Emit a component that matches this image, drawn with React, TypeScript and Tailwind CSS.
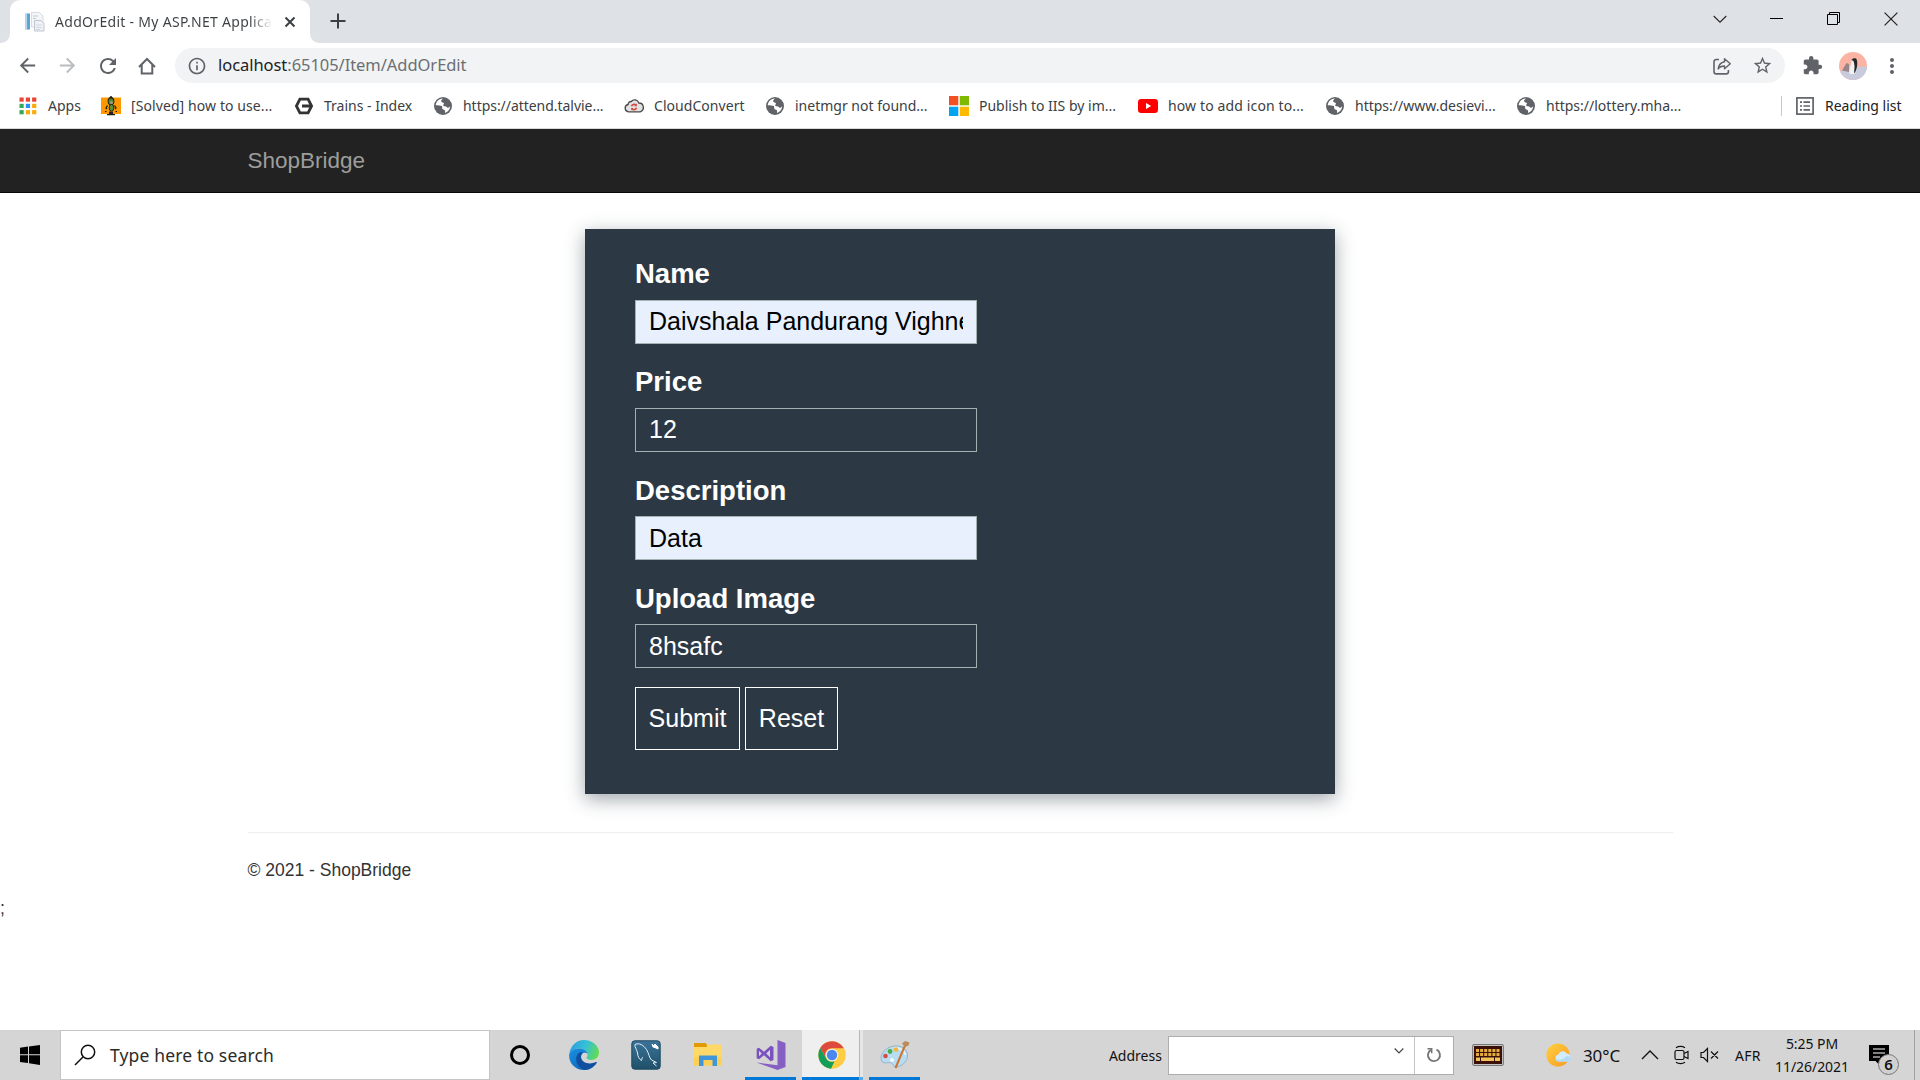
import type { ReactNode } from 'react';
import {
  MdArrowBack,
  MdArrowForward,
  MdRefresh,
  MdInfoOutline,
  MdStarBorder,
  MdExtension,
  MdMoreVert,
} from 'react-icons/md';

/* ---------- Browser icons ---------- */

function PageIcon() {
  return (
    <svg width="20" height="20" viewBox="0 0 20 20">
      <rect x="0.5" y="1.5" width="4.500" height="16" fill="#5aa5d6" />
      <rect x="0.5" y="1.5" width="1.5" height="16" fill="#b9d9ee" />
      <path d="M6.5 .5h8l3.500 3.500v11H6.500z" fill="#f3f5f8" stroke="#cfd3db" strokeWidth=".8" />
      <path d="M8 4h5M8 6.500h3" stroke="#c2c8d4" />
      <path d="M9.500 8.500h6.500l3 3v7.500H9.500z" fill="#eef1f6" stroke="#b4bac7" strokeWidth=".8" />
      <path d="M11 13h6M11 15.500h6M11 17.500h4" stroke="#d3d8e2" />
    </svg>
  );
}

function HomeIcon() {
  return (
    <svg width="20" height="20" viewBox="0 0 20 20" fill="none" stroke="#5f6368" strokeWidth="2">
      <path d="M2 11 10 3l8 8" />
      <path d="M4.700 9v8.500h10.600V9" />
    </svg>
  );
}

function ShareIcon() {
  return (
    <svg width="20" height="20" viewBox="0 0 20 20" fill="none" stroke="#5f6368" strokeWidth="1.600">
      <path d="M7 3.500H4.200A2.200 2.200 0 0 0 2 5.700v10a2.200 2.200 0 0 0 2.200 2.200h10a2.200 2.200 0 0 0 2.200-2.200V14" />
      <path d="M12.500 2.800 18.300 7.800l-5.800 5V10c-3 0-5 .8-6.300 3 .4-3.800 2.600-6.500 6.300-7.200z" strokeLinejoin="round" strokeWidth="1.400" />
    </svg>
  );
}

function AppsIcon() {
  const colors = ['#ea4335', '#ea4335', '#ea4335', '#34a853', '#2492ff', '#fbaa0b', '#34a853', '#fbaa0b', '#fbaa0b'];
  return (
    <svg width="20" height="20" viewBox="0 0 20 20">
      {colors.map((c, i) => (
        <rect key={i} x={1.500 + (i % 3) * 6.300} y={1.500 + Math.floor(i / 3) * 6.300} width="4.200" height="4.200" fill={c} />
      ))}
    </svg>
  );
}

function BeetleIcon() {
  return (
    <svg width="20" height="20" viewBox="0 0 20 20">
      <rect y="1.500" width="20" height="16.500" fill="#ff9800" />
      <path d="M7 4 10 .5 13 4M6.500 9.500 5 12l1 1M13.500 9.500 15 12l-1 1M4 15.500h1.500M14.500 15.500H16M6 18.700h8" fill="none" stroke="#1d1d10" strokeWidth="1.200" />
      <ellipse cx="10" cy="5.500" rx="3" ry="3.500" fill="#56803b" stroke="#1c2913" />
      <ellipse cx="10.500" cy="11.800" rx="2.300" ry="3.300" fill="#5a9434" stroke="#1c2913" />
      <circle cx="10.500" cy="6.500" r="1.500" fill="#9a9a8e" />
      <path d="M8 15.500h4v2.500H8z" fill="#222" />
    </svg>
  );
}

function HexIcon() {
  return (
    <svg width="20" height="20" viewBox="0 0 20 20" fill="none" stroke="#333" strokeWidth="2.800">
      <path d="M5.900 3.100h8.200L17.600 10l-3.500 6.900H5.900L2.400 10z" />
      <path d="M8 10h9" strokeWidth="3" />
    </svg>
  );
}

function GlobeIcon() {
  return (
    <svg width="20" height="20" viewBox="0 0 20 20">
      <circle cx="10" cy="10" r="9" fill="#5f6368" />
      <path d="M10.500 2.600c-1.500.6-2.600 1.500-2.300 2.800.4 1.200 2.300.6 2.700 1.800.3 1-1 1.300-.7 2.300.3.900 1.600.6 2.600.9 1.300.4 1.300 1.500 2.400 1.300.8-.2 1.300-.7 2-1.700-.1 3.200-2.400 6.200-5.300 7 .2-1.200.5-2-.3-2.900-.7-.8-1.900-.4-2.300-1.400-.4-1.100.3-1.900-.5-2.600C7.700 9.200 5 9.600 2.700 9.200 3 5.800 6 2.400 10.500 2.600z" fill="#fff" />
    </svg>
  );
}

function CloudIcon() {
  return (
    <svg width="20" height="20" viewBox="0 0 20 20">
      <path d="M4.500 15.800a3.700 3.700 0 0 1-.4-7.300 3 3 0 0 1 3.200-3 4.300 4.300 0 0 1 7.500 1.500 4.500 4.500 0 0 1 1.400 8.800z" fill="#e2e2e2" stroke="#484848" strokeWidth="1.300" />
      <path d="M7.500 10.300a2.600 2.600 0 0 1 4.500-1M12.500 11.800a2.600 2.600 0 0 1-4.500 1" fill="none" stroke="#d8453a" strokeWidth="1.600" />
      <path d="M12.800 7.600v2.600h-2.500zM7.200 14.500v-2.600h2.500z" fill="#d8453a" />
    </svg>
  );
}

function MicrosoftIcon() {
  return (
    <svg width="20" height="20" viewBox="0 0 20 20">
      <path d="M0 0h9.300v9.300H0z" fill="#f25022" />
      <path d="M10.700 0H20v9.300h-9.300z" fill="#7fba00" />
      <path d="M0 10.700h9.300V20H0z" fill="#00a4ef" />
      <path d="M10.700 10.700H20V20h-9.300z" fill="#ffb900" />
    </svg>
  );
}

function YouTubeIcon() {
  return (
    <svg width="20" height="20" viewBox="0 0 20 20">
      <rect y="3" width="20" height="14" rx="3.200" fill="#f00" />
      <path d="M8 7v6l5.200-3z" fill="#fff" />
    </svg>
  );
}

function ReadingListIcon() {
  return (
    <svg width="20" height="20" viewBox="0 0 20 20" fill="none" stroke="#5f6368" strokeWidth="1.700">
      <rect x="1.900" y="1.900" width="16.200" height="16.200" />
      <path d="M5 6.200h2M8.500 6.200h6.500M5 10h2M8.500 10h6.500M5 13.800h2M8.500 13.800h6.500" />
    </svg>
  );
}

function Avatar() {
  return (
    <svg width="28" height="28" viewBox="0 0 28 28">
      <defs>
        <clipPath id="avatar">
          <circle cx="14" cy="14" r="14" />
        </clipPath>
      </defs>
      <g clipPath="url(#avatar)">
        <path d="M0 0h28v28H0z" fill="#fbb4a4" />
        <path d="M0 19c6-2 10 0 14-2s9-3 14-2v13H0z" fill="#c7cbdb" />
        <path d="M3 18.500 7.500 11l2.500 1v8z" fill="#9a858a" />
        <path d="M12.500 9c1.200-2.600 3.500-3.200 5-1.500 1.400 3.500.5 11-1.800 14.500h-5c-1.500-3.500 1.500-8 1.800-13z" fill="#f1f1f1" />
        <path d="M12.500 8c1-2 4.700-2.500 5.300-.2 1.200 4.500 0 10.500-2.500 13.700-.5-3 .5-5 .2-7.500-.2-2-.5-3.500-1-5z" fill="#26262a" />
      </g>
    </svg>
  );
}

/* ---------- Browser chrome ---------- */

function TabStrip() {
  return (
    <div className="flex h-[43px] bg-[#dee1e6]">
      <div className="h-full w-[10px] bg-white">
        <div className="h-full rounded-br-[9px] bg-[#dee1e6]" />
      </div>
      <div className="flex w-[300px] items-center rounded-t-[10px] bg-white pl-[15px]">
        <PageIcon />
        <div className="ml-[10px] w-[217px] overflow-hidden whitespace-nowrap bg-linear-to-r from-[#3c4043] from-90% to-transparent bg-clip-text text-[14px] tracking-[0.3px] text-transparent">
          AddOrEdit - My ASP.NET Application
        </div>
        <svg className="ml-[12px]" width="12" height="12" viewBox="0 0 12 12" stroke="#3c4043" strokeWidth="2">
          <path d="m1.500 1.500 9 9m0-9-9 9" />
        </svg>
      </div>
      <div className="h-full w-[10px] bg-white">
        <div className="h-full rounded-bl-[9px] bg-[#dee1e6]" />
      </div>
      <svg className="ml-[10px] mt-[13px]" width="16" height="16" viewBox="0 0 16 16" stroke="#3c4043" strokeWidth="2">
        <path d="M8 .5v15M.5 8h15" />
      </svg>
      <div className="ml-auto flex h-[37px] items-center text-black">
        <svg className="mr-[43px]" width="14" height="14" viewBox="0 0 14 14" fill="none" stroke="#222" strokeWidth="1.100">
          <path d="m.7 4 6.300 6.200L13.300 4" />
        </svg>
        <svg className="mr-[44px]" width="13" height="13" viewBox="0 0 13 13" stroke="currentColor">
          <path d="M0 6.500h13" />
        </svg>
        <svg className="mr-[44px]" width="13" height="13" viewBox="0 0 13 13" fill="none" stroke="currentColor">
          <path d="M.5 2.500h10v10H.5zM2.500 2.500v-2h10v10h-2" />
        </svg>
        <svg className="mr-[22px]" width="14" height="14" viewBox="0 0 14 14" stroke="#222" strokeWidth="1.200">
          <path d="m.6.6 12.800 12.800m0-12.800L.6 13.400" />
        </svg>
      </div>
    </div>
  );
}

function Toolbar() {
  return (
    <div className="flex h-[45px] items-center bg-white pl-[16px] text-[#5f6368]">
      <MdArrowBack size={23} />
      <MdArrowForward className="ml-[17px] text-[#babcbe]" size={23} />
      <MdRefresh className="ml-[17px]" size={24} />
      <div className="ml-[17px]">
        <HomeIcon />
      </div>
      <div className="ml-[18px] flex h-[35px] w-[1610px] items-center rounded-full bg-[#f1f3f4] pl-3 pr-3">
        <MdInfoOutline size={20} />
        <div className="ml-[11px] text-[16.5px] tracking-[-0.05px] text-[#6b6f73]">
          <span className="text-[#202124]">localhost</span>:65105/Item/AddOrEdit
        </div>
        <div className="ml-auto flex items-center gap-5">
          <ShareIcon />
          <MdStarBorder size={21} />
        </div>
      </div>
      <MdExtension className="ml-[17px]" size={21} />
      <div className="ml-[16px]">
        <Avatar />
      </div>
      <MdMoreVert className="ml-[13px]" size={24} />
    </div>
  );
}

function Bookmark({ icon, label, className }: { icon: ReactNode; label: string; className: string }) {
  return (
    <div className={`flex shrink-0 items-center gap-[10px] whitespace-nowrap ${className}`}>
      {icon}
      <span>{label}</span>
    </div>
  );
}

function BookmarksBar() {
  return (
    <div className="flex h-[41px] items-center border-b border-[#d6d8db] bg-white pb-[5px] pl-[18px] text-[14px] text-[#3c4043]">
      <Bookmark className="w-[83px]" icon={<AppsIcon />} label="Apps" />
      <Bookmark className="w-[193px] tracking-[0.09px]" icon={<BeetleIcon />} label="[Solved] how to use..." />
      <Bookmark className="w-[139px]" icon={<HexIcon />} label="Trains - Index" />
      <Bookmark className="w-[191px] tracking-[-0.04px]" icon={<GlobeIcon />} label="https://attend.talvie..." />
      <Bookmark className="w-[141px] tracking-[0.05px]" icon={<CloudIcon />} label="CloudConvert" />
      <Bookmark className="w-[184px]" icon={<GlobeIcon />} label="inetmgr not found..." />
      <Bookmark className="w-[189px]" icon={<MicrosoftIcon />} label="Publish to IIS by im..." />
      <Bookmark className="w-[187px] tracking-[0.13px]" icon={<YouTubeIcon />} label="how to add icon to..." />
      <Bookmark className="w-[191px]" icon={<GlobeIcon />} label="https://www.desievi..." />
      <Bookmark className="w-[265px]" icon={<GlobeIcon />} label="https://lottery.mha..." />
      <div className="mr-[13px] h-5 w-px bg-[#c6c9cd]" />
      <Bookmark className="text-[#202124]" icon={<ReadingListIcon />} label="Reading list" />
    </div>
  );
}

/* ---------- Page ---------- */

type FieldProps = { label: string; value: string; autofilled?: boolean; raised?: boolean };

function Field({ label, value, autofilled = false, raised = false }: FieldProps) {
  return (
    <div className="mb-[18px] h-[90px]">
      <div className={`h-[46px] text-[27.5px] font-bold leading-[38px] text-white ${raised ? 'pt-[1px]' : 'pt-[2px]'}`}>
        {label}
      </div>
      <div
        className={`h-11 w-[342px] border border-[#a2b3af] px-[13px] text-[25px] ${
          raised ? 'leading-[40px]' : 'leading-[42px]'
        } ${autofilled ? 'bg-[#e8f0fe] text-black' : 'text-white'}`}
      >
        <div className="overflow-hidden whitespace-nowrap">{value}</div>
      </div>
    </div>
  );
}

function Page() {
  return (
    <div className="h-[901px] bg-white font-['Liberation_Sans',sans-serif]">
      <div className="h-16 border-b border-[#080808] bg-[#222] pl-[247.5px] text-[22.5px] leading-[63px] text-[#9d9d9d]">
        ShopBridge
      </div>
      <div className="mx-auto mt-9 h-[565px] w-[750px] bg-[#2c3944] pl-[50px] pt-[25px] shadow-[0_5px_18px_rgba(45,60,70,0.46)]">
        <Field label="Name" value="Daivshala Pandurang Vighnesh" autofilled raised />
        <Field label="Price" value="12" raised />
        <Field label="Description" value="Data" autofilled />
        <Field label="Upload Image" value="8hsafc" />
        <div className="mt-[19px] flex gap-[5px] text-[25px] leading-none text-white">
          <button className="h-[63px] w-[105px] border border-white">Submit</button>
          <button className="h-[63px] w-[93px] border border-white">Reset</button>
        </div>
      </div>
      <div className="mx-[247.5px] mt-[38px] border-t border-[#eee] pt-[25px] text-[17.5px] leading-[25px] text-[#333]">
        © 2021 - ShopBridge
      </div>
      <div className="mt-[13px] text-[17.5px] leading-[25px] text-[#333]">;</div>
    </div>
  );
}

/* ---------- Taskbar icons ---------- */

function EdgeIcon() {
  return (
    <svg width="30" height="30" viewBox="0 0 30 30">
      <defs>
        <linearGradient id="edgeTop" x1="0" y1=".3" x2="1" y2=".6">
          <stop offset="0" stopColor="#2a9fe0" />
          <stop offset=".5" stopColor="#35c1d8" />
          <stop offset="1" stopColor="#62dc4f" />
        </linearGradient>
        <linearGradient id="edgeLeft" x1="0" y1="0" x2=".6" y2="1">
          <stop offset="0" stopColor="#1b8fe0" />
          <stop offset="1" stopColor="#0f6cc0" />
        </linearGradient>
      </defs>
      <path d="M.3 14C1.200 6 7.500 0 15 0c8.500 0 15 6 15 12.500 0 4.500-3.500 7.500-7.500 7.500-3.300 0-5-1.200-5-2.200 0-.7 1.100-1.300 1.100-3.300C18.600 11 15 8.500 10 8.500 6 8.500 2 10.500.3 14z" fill="url(#edgeTop)" />
      <path d="M.2 14.500C1.500 10.500 5.500 8.500 10 8.500c5 0 8.500 2.500 8.600 5.500-2-2.300-6.600-1.500-6.600 3 0 7 6 12 12 10-2.500 2-5.500 3-9 3C6 30-.5 23 .2 14.500z" fill="url(#edgeLeft)" />
      <path d="M10.500 12.500C7 15 6 20 9 25c1.500 2.500 3.700 4.300 6.500 5 5-.2 9.500-2.500 12.300-7.200.3-.7-.2-1.100-.8-.8-6.500 3-14.500 1-15-5 0-2 .8-3.600 2-4.500-1-.5-2.500-.5-3.500 0z" fill="#0f4f9e" />
    </svg>
  );
}

function MySqlIcon() {
  return (
    <svg width="30" height="30" viewBox="0 0 30 30">
      <defs>
        <linearGradient id="sql" x1="0" y1="0" x2="0" y2="1">
          <stop offset="0" stopColor="#3a739a" />
          <stop offset="1" stopColor="#1f5068" />
        </linearGradient>
      </defs>
      <rect x=".8" y=".8" width="28.400" height="28.400" rx="3" fill="url(#sql)" stroke="#1e4a62" />
      <path d="M4 4.500C8 2.500 12.500 5 15.500 9.500c2.500 4 2.500 8 5 10.500l5 2.500-3.500.5 3.500 3M4 4.500C3.500 7.500 6 9.500 6.500 13c.5 4 1.500 6 4 7.500.500-2 .5-3 1.500-3.500" fill="none" stroke="#e5eff5" strokeWidth="1" />
      <path d="m21 4 2 2 1-2 3 3v2l-2-1-3-1z" fill="#fff" stroke="#fff" />
    </svg>
  );
}

function FolderIcon() {
  return (
    <svg width="28" height="24" viewBox="0 0 28 24">
      <path d="M0 0h11.500l1.500 1.500V5H0z" fill="#e09b00" />
      <path d="M0 4h12.500l2-2.500H27.500V22.500H0z" fill="#ffd968" />
      <path d="M0 14h27.500v8.500H0z" fill="#fdcf55" />
      <path d="M5 12.500h18V23h-4.500v-6h-9v6H5z" fill="#3f97d9" />
    </svg>
  );
}

function VisualStudioIcon() {
  return (
    <svg width="30" height="30" viewBox="0 0 30 30">
      <path d="M21.500 0 29.500 3v24l-8 3-21-7.500 21 2.700z" fill="#865fc5" />
      <path d="M.7 8.800 3 7.800 8 11.700l6.700-5.900L17.500 7v13l-2.800 1.200L8 15.300 3 19.200.7 18.200zM3 10.800v5.400L5.800 13.500zM14 9.800 10.200 13.500 14 17.200z" fill="#7b51bf" fillRule="evenodd" />
    </svg>
  );
}

function ChromeIcon() {
  return (
    <svg width="28" height="28" viewBox="0 0 28 28">
      <circle cx="14" cy="14" r="13.700" fill="#ffcd40" />
      <path d="M2.200 7.100A13.700 13.700 0 0 1 25.900 7.200H14a6.800 6.800 0 0 0-6 10z" fill="#dd4b3e" />
      <path d="M2.200 7.100 8 17.300a6.800 6.800 0 0 0 8.500 3L13 27.700A13.700 13.700 0 0 1 2.200 7.100z" fill="#159d5a" />
      <circle cx="14" cy="14" r="6.300" fill="#f1f1f1" />
      <circle cx="14" cy="14" r="5.200" fill="#4a87ee" />
    </svg>
  );
}

function PaintIcon() {
  return (
    <svg width="30" height="28" viewBox="0 0 30 28">
      <path d="M14 5c7-1 13 3 13.500 9 .4 6-5 11-11 12-3 .4-3-2.500-5-4-2.300-1.500-7 1.500-9.500-1.500C-1.500 15 5 6 14 5z" fill="#b8dcf2" stroke="#88aac4" strokeWidth=".8" />
      <path d="M14 7c6-.5 10.500 2.500 11.500 7" fill="none" stroke="#e4f4fd" strokeWidth="2" />
      <circle cx="10" cy="10.500" r="2.400" fill="#45b045" />
      <circle cx="16" cy="8.500" r="2.300" fill="#f3b53a" />
      <circle cx="5.500" cy="15" r="2.300" fill="#db4a42" />
      <circle cx="12" cy="19" r="2" fill="#f4f9fc" />
      <path d="M25 4.500 15.500 27" stroke="#cc7430" strokeWidth="2" />
      <path d="M22 2.500 25 0l4.500 1.500-1 3L25 6z" fill="#b88d59" />
    </svg>
  );
}

function KeyboardIcon() {
  const keys = [0, 1, 2, 3, 4, 5];
  return (
    <svg width="32" height="22" viewBox="0 0 32 22">
      <rect x=".7" y=".7" width="30.600" height="20.600" rx="1.500" fill="#dedede" stroke="#777" strokeWidth="1.200" />
      <rect x="2" y="2" width="28" height="18" fill="#3a1008" />
      {keys.map((k) => (
        <g key={k} fill="#e4ae3f">
          <rect x={4 + k * 4.100} y="5" width="3" height="3" />
          <rect x={4 + k * 4.100} y="9" width="3" height="3" />
        </g>
      ))}
      <path d="M4 13.500h4V17H4zM9 13.500h13V17H9zM23 13.500h5V17h-5z" fill="#efc257" />
    </svg>
  );
}

function WeatherIcon() {
  return (
    <svg width="26" height="24" viewBox="0 0 26 24">
      <defs>
        <linearGradient id="sun" x1="0" y1="0" x2="1" y2="1">
          <stop offset="0" stopColor="#ffd23f" />
          <stop offset="1" stopColor="#f99a25" />
        </linearGradient>
      </defs>
      <circle cx="12" cy="12" r="11.600" fill="url(#sun)" />
      <path d="M12.500 18.500a3.600 3.600 0 0 1 0-7.100 4.600 4.600 0 0 1 8.500-.6 3.900 3.900 0 0 1 .5 7.700z" fill="#d3ecfc" />
      <path d="M12.500 18.500a3.600 3.600 0 0 1-3-2.500c4 1.500 8 .5 11-3 2 0 3.500.5 4.500 2a3.800 3.800 0 0 1-3.500 3.500z" fill="#b0daf8" />
    </svg>
  );
}

/* ---------- Taskbar ---------- */

function TaskApp({ className = '', children }: { className?: string; children: ReactNode }) {
  return <div className={`flex h-full shrink-0 items-center justify-center ${className}`}>{children}</div>;
}

function Taskbar() {
  return (
    <div className="flex h-[50px] bg-[#d5d5d5] text-[#111]">
      <div className="flex w-[60px] items-center justify-center">
        <svg width="20" height="20" viewBox="0 0 20 20">
          <path d="M0 2.700 8 1.600v7.700H0zM9 1.500 20 0v9.300H9zM0 10.300h8V18l-8-1.100zM9 10.300h11V20L9 18.200z" />
        </svg>
      </div>
      <div className="flex w-[430px] items-center border border-[#c4c4c4] bg-white pl-[13px]">
        <svg width="22" height="22" viewBox="0 0 22 22" fill="none" stroke="#111" strokeWidth="1.500">
          <circle cx="14" cy="8" r="6.700" />
          <path d="M9.200 12.800 1 21" />
        </svg>
        <span className="ml-[14px] text-[17.5px] tracking-[0.15px] text-[#2b2b2b]">Type here to search</span>
      </div>
      <TaskApp className="w-[60px]">
        <div className="size-5 rounded-full border-[3px] border-black" />
      </TaskApp>
      <TaskApp className="ml-[3px] w-[62px]">
        <EdgeIcon />
      </TaskApp>
      <TaskApp className="w-[62px]">
        <MySqlIcon />
      </TaskApp>
      <TaskApp className="w-[62px]">
        <FolderIcon />
      </TaskApp>
      <TaskApp className="ml-[6px] w-[51px] border-b-[3px] border-[#0078d7] pt-[3px]">
        <VisualStudioIcon />
      </TaskApp>
      <TaskApp className="ml-[6px] w-[57px] border-b-[3px] border-[#0078d7] bg-[#efefef] pl-[2px] pt-[3px]">
        <ChromeIcon />
      </TaskApp>
      <div className="h-full w-1 border-b-[3px] border-l border-b-[#5ba7e6] border-l-[#b5b5b5] bg-[#e6e6e6]" />
      <TaskApp className="ml-[6px] w-[51px] border-b-[3px] border-[#0078d7] pt-[2px]">
        <PaintIcon />
      </TaskApp>
      <div className="ml-auto flex h-full shrink-0 items-center">
        <span className="text-[14px] tracking-[0.02px]">Address</span>
        <div className="ml-[6px] flex h-[39px] w-[286px] border border-[#adadad] bg-white">
          <div className="flex w-[246px] justify-end border-r border-[#c4c4c4] pr-[10px] pt-[10px]">
            <svg width="10" height="8" viewBox="0 0 10 8" fill="none" stroke="#444" strokeWidth="1.200">
              <path d="m.7 1.500 4.300 4.300 4.300-4.300" />
            </svg>
          </div>
          <div className="flex flex-1 items-center justify-center">
            <svg width="16" height="16" viewBox="0 0 16 16" fill="none" stroke="#777" strokeWidth="1.900">
              <path d="M10.500 2.700a6 6 0 1 1-5.500.2" />
              <path d="M1.500 1.800h4.200v4.400" strokeWidth="1.500" />
            </svg>
          </div>
        </div>
        <div className="ml-[18px]">
          <KeyboardIcon />
        </div>
        <div className="ml-[42px]">
          <WeatherIcon />
        </div>
        <span className="ml-[11px] w-[38px] whitespace-nowrap pt-[1px] text-[17px] tracking-[-0.1px]">30°C</span>
        <svg className="ml-[20px]" width="18" height="10" viewBox="0 0 18 10" fill="none" stroke="#111" strokeWidth="1.300">
          <path d="m1 9 8-8 8 8" />
        </svg>
        <svg className="ml-[15px]" width="16" height="20" viewBox="0 0 16 20" fill="none" stroke="#111" strokeWidth="1.200">
          <rect x="1" y="5.500" width="9" height="9" rx="1.500" />
          <path d="M10 8.500 14 6.500v7l-4-2M2 2.800c2.500-1.800 6.500-1.800 9 0M2 17.200c2.500 1.800 6.500 1.800 9 0" />
        </svg>
        <svg className="ml-[10px]" width="20" height="16" viewBox="0 0 20 16" fill="none" stroke="#111" strokeWidth="1.200">
          <path d="M1 5.500h2.500L7.500 1.500v13L3.500 10.500H1zM11 4.500l7 7m0-7-7 7" />
        </svg>
        <span className="ml-[15px] w-[28px] text-[14px] tracking-[0.3px]">AFR</span>
        <div className="ml-[11px] flex w-[76px] flex-col items-center whitespace-nowrap text-[14px] leading-[23px] tracking-[-0.05px]">
          <span>5:25 PM</span>
          <span>11/26/2021</span>
        </div>
        <div className="relative ml-[19px] h-[21px] w-5">
          <svg width="20" height="21" viewBox="0 0 20 21">
            <path d="M0 0h20v16H11v4.500L6.500 16H0z" />
            <path d="M4 4h12M4 8h12M4 12h7" stroke="#fff" strokeWidth="1.200" />
          </svg>
          <div className="absolute left-[9px] top-[9px] flex size-[21px] items-center justify-center rounded-full border border-[#777] bg-[#d0d0d0] text-[15px] font-semibold leading-none">
            6
          </div>
        </div>
        <div className="ml-[25px] mr-[5px] h-[50px] w-px bg-[#a2a2a2]" />
      </div>
    </div>
  );
}

export default function App() {
  return (
    <div className="flex h-[1080px] w-[1920px] flex-col overflow-hidden bg-white font-['Noto_Sans','Open_Sans',sans-serif]">
      <TabStrip />
      <Toolbar />
      <BookmarksBar />
      <Page />
      <Taskbar />
    </div>
  );
}
